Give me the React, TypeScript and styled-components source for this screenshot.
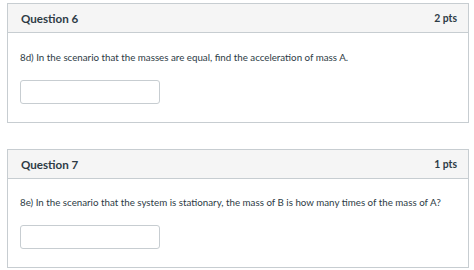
import React from "react";
import styled, { createGlobalStyle } from "styled-components";

const Global = createGlobalStyle`
  html, body { margin: 0; padding: 0; background: #ffffff; }
  body { font-family: Lato, "Open Sans", sans-serif; color: #2d3b45; }
`;

const Page = styled.div`
  display: flex;
  flex-direction: column;
  gap: 26px;
  padding: 3px 6px 0 7px;
  width: 462px;
`;

const Card = styled.section`
  border: 1px solid #c7cdd1;
  background: #fff;
`;

const Header = styled.header`
  display: flex;
  align-items: center;
  justify-content: space-between;
  height: 28px;
  padding: 0 11px 0 13px;
  background: #f5f5f5;
  border-bottom: 1px solid #c7cdd1;
`;

const Title = styled.h3`
  margin: 0;
  font-size: 11.6px;
  font-weight: 700;
  color: #2d3b45;
`;

const Points = styled.span`
  font-size: 10.4px;
  font-weight: 700;
  color: #2d3b45;
`;

const Body = styled.div`
  display: flex;
  flex-direction: column;
  align-items: flex-start;
  gap: 17px;
  padding: ${(p: { $top: number }) => p.$top}px 12px 18px 12px;
`;

const Prompt = styled.p`
  margin: 0;
  font-size: 9.75px;
  line-height: 12px;
  color: #2d3b45;
`;

const Answer = styled.input`
  box-sizing: border-box;
  width: 140px;
  height: 24px;
  border: 1px solid #c7cdd1;
  border-radius: 3px;
  background: #fff;
  outline: none;
`;

const questions = [
  { title: "Question 6", pts: "2 pts", text: "8d) In the scenario that the masses are equal, find the acceleration of mass A.", top: 18 },
  { title: "Question 7", pts: "1 pts", text: "8e) In the scenario that the system is stationary, the mass of B is how many times of the mass of A?", top: 17 },
];

export default function App() {
  return (
    <>
      <Global />
      <Page>
        {questions.map((q) => (
          <Card key={q.title}>
            <Header>
              <Title>{q.title}</Title>
              <Points>{q.pts}</Points>
            </Header>
            <Body $top={q.top}>
              <Prompt>{q.text}</Prompt>
              <Answer type="text" aria-label={q.title} />
            </Body>
          </Card>
        ))}
      </Page>
    </>
  );
}
